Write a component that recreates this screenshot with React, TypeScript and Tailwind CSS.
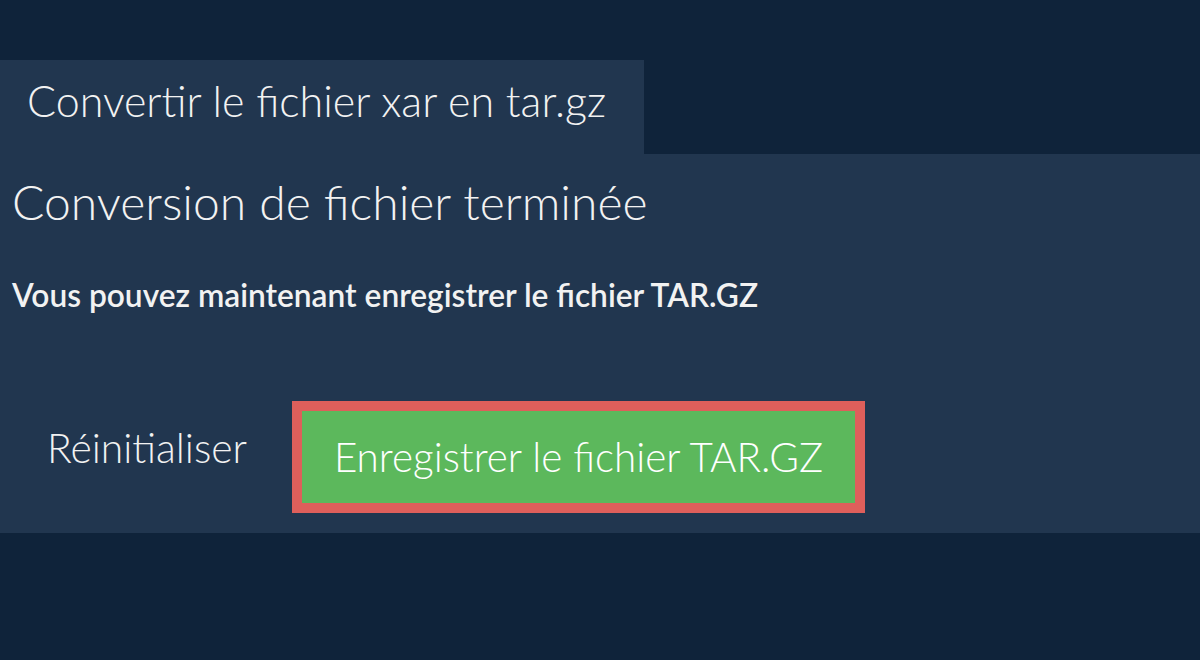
import React from "react";

export default function App() {
  return (
    <div
      className="w-[1200px] h-[660px] bg-[#0f233a] text-[#f2f2f2] overflow-hidden"
      style={{ fontFamily: "Lato, 'Noto Sans', sans-serif" }}
    >
      <div className="pt-[60px]">
        <div className="w-[644px] h-[94px] bg-[#21364f] pl-[27px] pt-[19px]">
          <h1 className="text-[43px] font-light leading-none">Conver&zwnj;tir le fichier xar en tar.gz</h1>
        </div>
        <div className="bg-[#21364f] h-[379px] pl-[12px] pt-[24px]">
          <h2 className="text-[48px] font-light leading-none">Conversion de fichier terminée</h2>
          <p className="mt-[54px] text-[31.7px] font-semibold leading-none">
            Vous pouvez maintenant enregistrer le fichier TAR.GZ
          </p>
          <div className="mt-[89px] flex items-start">
            <button className="ml-[35px] w-[245px] mt-[27px] text-left text-[40.8px] font-light leading-none text-[#f2f2f2]">
              Réini&zwnj;tialiser
            </button>
            <div className="border-[10px] border-[#de5f5b] bg-[#5cb85c] w-[573px] h-[112px] flex items-center justify-center">
              <span className="text-[40.4px] font-light leading-none text-white">Enregistrer le fichier TAR.GZ</span>
            </div>
          </div>
        </div>
      </div>
    </div>
  );
}
